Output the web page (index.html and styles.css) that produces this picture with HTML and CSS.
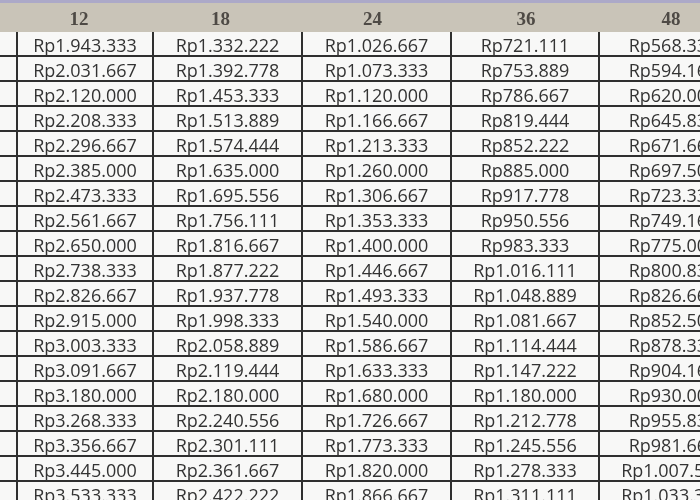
FILE: index.html
```html
<!DOCTYPE html>
<html>
<head>
<meta charset="utf-8">
<link rel="stylesheet" href="styles.css">
</head>
<body>
<div class="sheet" id="sheet">
  <div class="head">
    <div class="hc"></div>
    <div class="hc">12</div>
    <div class="hc">18</div>
    <div class="hc">24</div>
    <div class="hc">36</div>
    <div class="hc">48</div>
  </div>
  <div class="row"><div class="c"></div><div class="c">Rp1.943.333</div><div class="c">Rp1.332.222</div><div class="c">Rp1.026.667</div><div class="c">Rp721.111</div><div class="c">Rp568.333</div></div>
  <div class="row"><div class="c"></div><div class="c">Rp2.031.667</div><div class="c">Rp1.392.778</div><div class="c">Rp1.073.333</div><div class="c">Rp753.889</div><div class="c">Rp594.167</div></div>
  <div class="row"><div class="c"></div><div class="c">Rp2.120.000</div><div class="c">Rp1.453.333</div><div class="c">Rp1.120.000</div><div class="c">Rp786.667</div><div class="c">Rp620.000</div></div>
  <div class="row"><div class="c"></div><div class="c">Rp2.208.333</div><div class="c">Rp1.513.889</div><div class="c">Rp1.166.667</div><div class="c">Rp819.444</div><div class="c">Rp645.833</div></div>
  <div class="row"><div class="c"></div><div class="c">Rp2.296.667</div><div class="c">Rp1.574.444</div><div class="c">Rp1.213.333</div><div class="c">Rp852.222</div><div class="c">Rp671.667</div></div>
  <div class="row"><div class="c"></div><div class="c">Rp2.385.000</div><div class="c">Rp1.635.000</div><div class="c">Rp1.260.000</div><div class="c">Rp885.000</div><div class="c">Rp697.500</div></div>
  <div class="row"><div class="c"></div><div class="c">Rp2.473.333</div><div class="c">Rp1.695.556</div><div class="c">Rp1.306.667</div><div class="c">Rp917.778</div><div class="c">Rp723.333</div></div>
  <div class="row"><div class="c"></div><div class="c">Rp2.561.667</div><div class="c">Rp1.756.111</div><div class="c">Rp1.353.333</div><div class="c">Rp950.556</div><div class="c">Rp749.167</div></div>
  <div class="row"><div class="c"></div><div class="c">Rp2.650.000</div><div class="c">Rp1.816.667</div><div class="c">Rp1.400.000</div><div class="c">Rp983.333</div><div class="c">Rp775.000</div></div>
  <div class="row"><div class="c"></div><div class="c">Rp2.738.333</div><div class="c">Rp1.877.222</div><div class="c">Rp1.446.667</div><div class="c">Rp1.016.111</div><div class="c">Rp800.833</div></div>
  <div class="row"><div class="c"></div><div class="c">Rp2.826.667</div><div class="c">Rp1.937.778</div><div class="c">Rp1.493.333</div><div class="c">Rp1.048.889</div><div class="c">Rp826.667</div></div>
  <div class="row"><div class="c"></div><div class="c">Rp2.915.000</div><div class="c">Rp1.998.333</div><div class="c">Rp1.540.000</div><div class="c">Rp1.081.667</div><div class="c">Rp852.500</div></div>
  <div class="row"><div class="c"></div><div class="c">Rp3.003.333</div><div class="c">Rp2.058.889</div><div class="c">Rp1.586.667</div><div class="c">Rp1.114.444</div><div class="c">Rp878.333</div></div>
  <div class="row"><div class="c"></div><div class="c">Rp3.091.667</div><div class="c">Rp2.119.444</div><div class="c">Rp1.633.333</div><div class="c">Rp1.147.222</div><div class="c">Rp904.167</div></div>
  <div class="row"><div class="c"></div><div class="c">Rp3.180.000</div><div class="c">Rp2.180.000</div><div class="c">Rp1.680.000</div><div class="c">Rp1.180.000</div><div class="c">Rp930.000</div></div>
  <div class="row"><div class="c"></div><div class="c">Rp3.268.333</div><div class="c">Rp2.240.556</div><div class="c">Rp1.726.667</div><div class="c">Rp1.212.778</div><div class="c">Rp955.833</div></div>
  <div class="row"><div class="c"></div><div class="c">Rp3.356.667</div><div class="c">Rp2.301.111</div><div class="c">Rp1.773.333</div><div class="c">Rp1.245.556</div><div class="c">Rp981.667</div></div>
  <div class="row"><div class="c"></div><div class="c">Rp3.445.000</div><div class="c">Rp2.361.667</div><div class="c">Rp1.820.000</div><div class="c">Rp1.278.333</div><div class="c">Rp1.007.500</div></div>
  <div class="row"><div class="c"></div><div class="c">Rp3.533.333</div><div class="c">Rp2.422.222</div><div class="c">Rp1.866.667</div><div class="c">Rp1.311.111</div><div class="c">Rp1.033.333</div></div>
</div>
</body>
</html>
```
FILE: styles.css
```css
html, body {
  margin: 0;
  padding: 0;
  width: 700px;
  height: 500px;
  overflow: hidden;
  background: #f6f6f4;
}
.sheet {
  width: 748px;
  filter: blur(0.5px);
}
.head, .row {
  display: grid;
  grid-template-columns: 18px 136px 149px 149px 148px 148px;
}
.head {
  height: 32px;
  box-sizing: border-box;
  border-top: 3px solid #aca9c8;
  background: #c9c4b8;
}
.hc {
  font-family: "Liberation Serif", "Times New Roman", serif;
  font-weight: bold;
  font-size: 19px;
  color: #4e4a45;
  display: flex;
  align-items: center;
  justify-content: center;
  padding-top: 2px;
}
.hc:nth-child(2) { padding-right: 14px; }
.hc:nth-child(3) { padding-right: 16px; }
.hc:nth-child(4) { padding-right: 10px; }
.hc:nth-child(6) { padding-right: 6px; }
.row {
  height: 25px;
}
.c {
  box-sizing: border-box;
  border-right: 2px solid #2f2f2f;
  border-bottom: 2px solid #2f2f2f;
  background: #f8f8f7;
  font-family: "Open Sans", "Liberation Sans", sans-serif;
  font-size: 18px;
  color: #333333;
  display: flex;
  align-items: center;
  justify-content: center;
  line-height: 1;
  padding-top: 3px;
  white-space: nowrap;
}
```
